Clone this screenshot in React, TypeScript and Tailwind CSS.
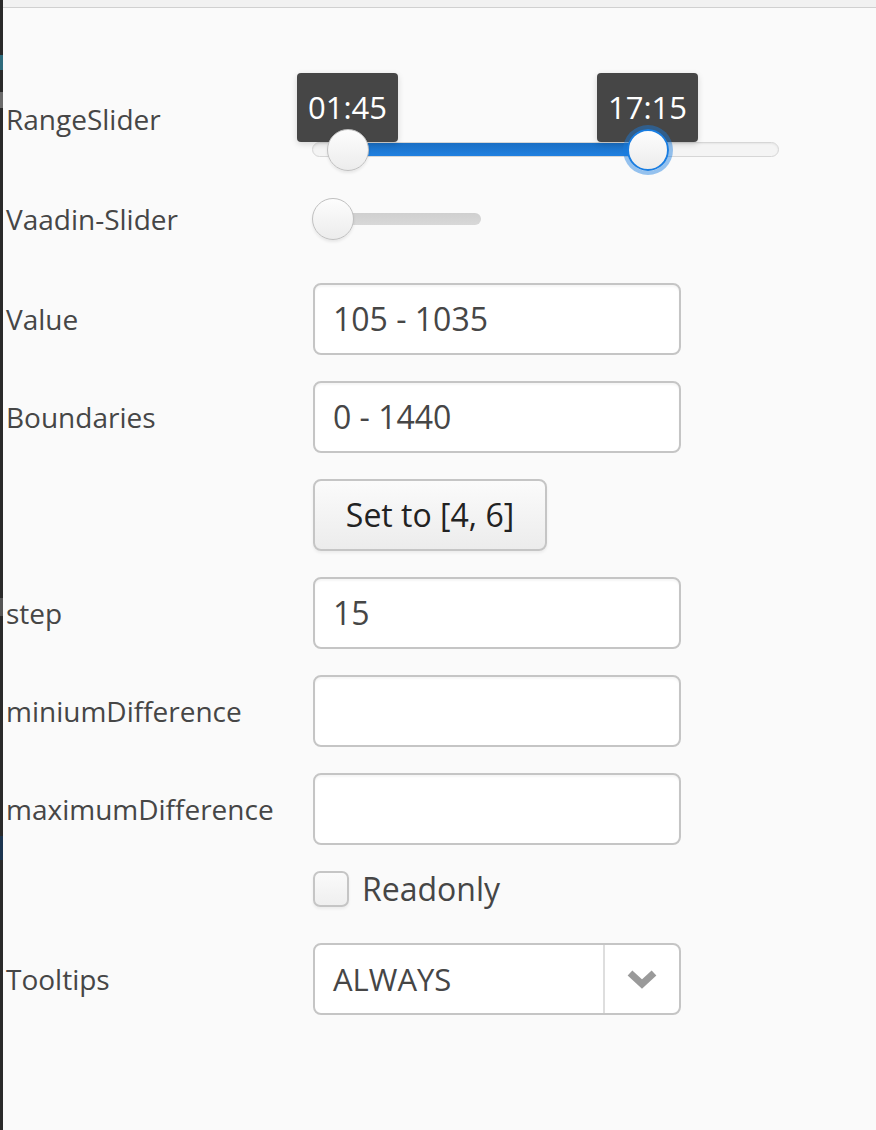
import React from "react";

const labelCls = "w-[307px] shrink-0 text-[28px] leading-none text-[#464646]";
const fieldCls =
  "w-[368px] h-[72px] rounded-[8px] border-2 border-[#c5c5c5] bg-white shadow-[inset_0_2px_2px_rgba(0,0,0,0.04)] flex items-center pl-[18px] text-[32px] text-[#464646]";

const Row = ({
  label,
  className,
  labelClass = "",
  children,
}: {
  label: string;
  className: string;
  labelClass?: string;
  children?: React.ReactNode;
}) => (
  <div className={`flex items-center ${className}`}>
    <div className={`${labelCls} ${labelClass}`}>{label}</div>
    {children}
  </div>
);

const Handle = ({ focused, className }: { focused?: boolean; className: string }) => (
  <div
    className={`absolute w-[42px] h-[42px] rounded-full bg-gradient-to-b from-[#fdfdfd] to-[#ececec] ${
      focused
        ? "border-2 border-[#197de1] shadow-[0_0_0_4px_rgba(25,125,225,0.45)]"
        : "border border-[#c0c0c0] shadow-[0_2px_3px_rgba(0,0,0,0.08)]"
    } ${className}`}
  />
);

const Tooltip = ({ text, className }: { text: string; className: string }) => (
  <div
    className={`absolute top-0 w-[101px] h-[69px] rounded-[4px] bg-[#464646] shadow-[0_2px_6px_rgba(0,0,0,0.15)] flex items-center justify-center text-white text-[31px] ${className}`}
  >
    {text}
  </div>
);

export default function App() {
  return (
    <div className="w-[876px] h-[1130px] flex bg-[#fafafa] font-['Open_Sans',sans-serif] overflow-hidden">
      <div className="w-[3px] shrink-0 bg-[#2a2a2a] flex flex-col">
        <div className="h-[55px]" />
        <div className="h-[15px] bg-[#2f6b7c]" />
        <div className="h-[22px]" />
        <div className="h-[16px] bg-[#6a6a6a]" />
        <div className="h-[490px]" />
        <div className="h-[18px] bg-[#555]" />
        <div className="h-[220px]" />
        <div className="h-[24px] bg-[#1c3550]" />
      </div>
      <div className="flex-1 flex flex-col">
        <div className="h-[8px] bg-[#f1f1f1] border-b border-[#d0d0d0]" />
        <div className="flex flex-col pl-[3px]">
          <Row label="RangeSlider" labelClass="-mt-[6px]" className="mt-[65px] h-[98px]">
            <div className="relative w-[468px] h-[98px] -ml-px">
              <div className="absolute left-0 top-[69px] w-[467px] h-[15px] rounded-full border border-[#d6d6d6] bg-[#f4f4f4] shadow-[inset_0_1px_2px_rgba(0,0,0,0.06)]" />
              <div className="absolute left-[35px] top-[70px] w-[300px] h-[13px] bg-gradient-to-b from-[#1a6fc4] to-[#2080e0]" />
              <Tooltip text="01:45" className="left-[-15px]" />
              <Tooltip text="17:15" className="left-[285px]" />
              <Handle className="left-[15px] top-[56px]" />
              <Handle focused className="left-[315px] top-[56px]" />
            </div>
          </Row>
          <Row label="Vaadin-Slider" className="mt-[27px] h-[42px]">
            <div className="relative w-[168px] h-[42px]">
              <div className="absolute left-0 top-[15px] w-[168px] h-[12px] rounded-full bg-gradient-to-b from-[#cfcfcf] to-[#d8d8d8]" />
              <Handle className="left-[-1px] top-0" />
            </div>
          </Row>
          <Row label="Value" className="mt-[43px]">
            <div className={fieldCls}>105 - 1035</div>
          </Row>
          <Row label="Boundaries" className="mt-[26px]">
            <div className={fieldCls}>0 - 1440</div>
          </Row>
          <Row label="" className="mt-[26px]">
            <button className="w-[234px] h-[72px] rounded-[8px] border-2 border-[#c5c5c5] bg-gradient-to-b from-[#fbfbfb] to-[#ececec] shadow-[0_2px_3px_rgba(0,0,0,0.06)] text-[32px] text-[#222]">
              Set to [4, 6]
            </button>
          </Row>
          <Row label="step" className="mt-[26px]">
            <div className={fieldCls}>15</div>
          </Row>
          <Row label="miniumDifference" className="mt-[26px]">
            <div className={fieldCls} />
          </Row>
          <Row label="maximumDifference" className="mt-[26px]">
            <div className={fieldCls} />
          </Row>
          <Row label="" className="mt-[26px] h-[36px]">
            <div className="w-[36px] h-[36px] rounded-[7px] border-2 border-[#c5c5c5] bg-gradient-to-b from-[#fafafa] to-[#efefef] shadow-[0_2px_3px_rgba(0,0,0,0.06)]" />
            <span className="ml-[13px] text-[32px] text-[#464646]">Readonly</span>
          </Row>
          <Row label="Tooltips" className="mt-[36px]">
            <div className="w-[368px] h-[72px] rounded-[8px] border-2 border-[#c5c5c5] bg-white flex">
              <div className="flex-1 flex items-center pl-[18px] text-[31px] text-[#464646]">ALWAYS</div>
              <div className="w-[76px] border-l-2 border-[#dedede] flex items-center justify-center">
                <svg width="30" height="20" viewBox="0 0 30 20">
                  <polyline points="3,4 15,15 27,4" fill="none" stroke="#9a9a9a" strokeWidth="7" />
                </svg>
              </div>
            </div>
          </Row>
        </div>
      </div>
    </div>
  );
}
